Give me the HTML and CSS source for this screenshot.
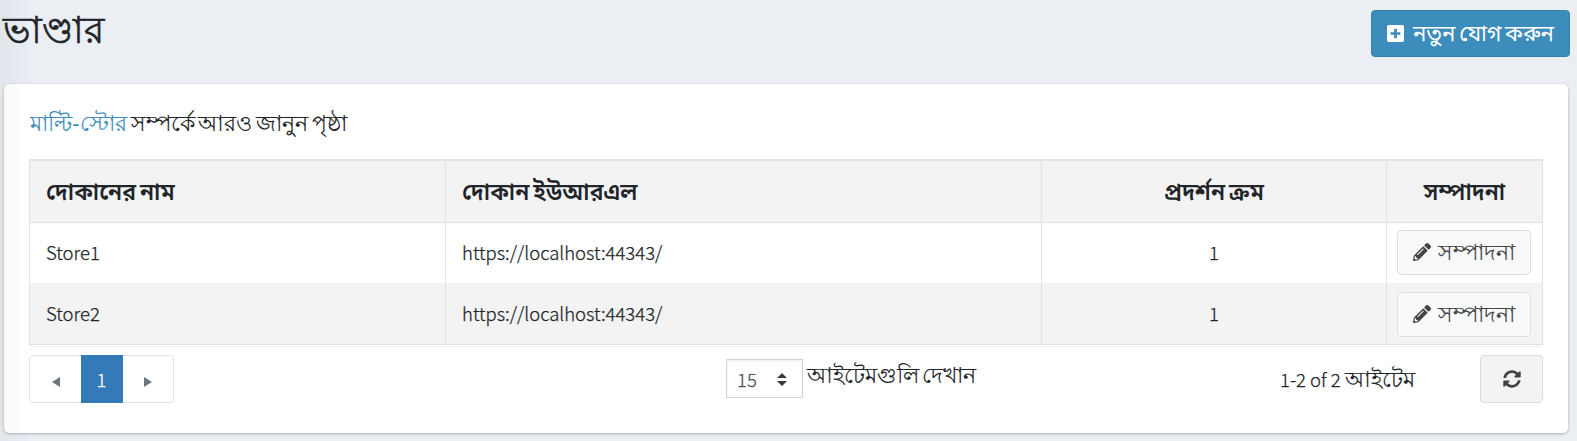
FILE: index.html
```html
<!DOCTYPE html>
<html lang="bn">
<head>
<meta charset="utf-8">
<title>ভাণ্ডার</title>
<link rel="stylesheet" href="styles.css">
</head>
<body>
<header class="page-header">
  <h1>ভাণ্ডার</h1>
  <button class="btn-add"><svg viewBox="0 0 448 448" width="17" height="17"><path fill="#fff" fill-rule="evenodd" d="M48 0h352a48 48 0 0 1 48 48v352a48 48 0 0 1-48 48H48a48 48 0 0 1-48-48V48A48 48 0 0 1 48 0zm140 96v92H96v72h92v92h72v-92h92v-72h-92V96z"/></svg><span>নতুন যোগ করুন</span></button>
</header>
<main class="card">
  <p class="intro bn"><a>মাল্টি-স্টোর</a> সম্পর্কে আরও জানুন পৃষ্ঠা</p>
  <div class="grid">
    <div class="row head">
      <div class="cell bn">দোকানের নাম</div><div class="cell bn">দোকান ইউআরএল</div><div class="cell center bn">প্রদর্শন ক্রম</div><div class="cell center bn">সম্পাদনা</div>
    </div>
    <div class="row">
      <div class="cell">Store1</div><div class="cell">https://localhost:44343/</div><div class="cell center">1</div>
      <div class="cell action"><button class="btn-edit"><svg viewBox="0 0 512 512" width="18" height="18"><path fill="#444" fill-rule="evenodd" d="M498 142l-46 46c-5 5-12 5-17 0L324 77c-5-5-5-12 0-17l46-46c19-19 49-19 68 0l60 60c19 19 19 49 0 68zM284 100L22 362 0 484c-3 16 12 30 28 28l122-22 262-262c5-5 5-12 0-17L301 100c-5-5-12-5-17 0zM124 340c-5-5-5-14 0-19l154-154c5-5 14-5 19 0s5 14 0 19L143 340c-5 5-14 5-19 0zM88 424h48v36l-64 12-32-32 12-64h36z"/></svg><span class="bn">সম্পাদনা</span></button></div>
    </div>
    <div class="row alt">
      <div class="cell">Store2</div><div class="cell">https://localhost:44343/</div><div class="cell center">1</div>
      <div class="cell action"><button class="btn-edit"><svg viewBox="0 0 512 512" width="18" height="18"><path fill="#444" fill-rule="evenodd" d="M498 142l-46 46c-5 5-12 5-17 0L324 77c-5-5-5-12 0-17l46-46c19-19 49-19 68 0l60 60c19 19 19 49 0 68zM284 100L22 362 0 484c-3 16 12 30 28 28l122-22 262-262c5-5 5-12 0-17L301 100c-5-5-12-5-17 0zM124 340c-5-5-5-14 0-19l154-154c5-5 14-5 19 0s5 14 0 19L143 340c-5 5-14 5-19 0zM88 424h48v36l-64 12-32-32 12-64h36z"/></svg><span class="bn">সম্পাদনা</span></button></div>
    </div>
  </div>
  <footer class="pager">
    <div class="pages">
      <span class="page"><svg width="8" height="10"><path fill="#6c757d" d="M8 0v10L0 5z"/></svg></span><span class="page active">1</span><span class="page"><svg width="8" height="10"><path fill="#6c757d" d="M0 0v10l8-5z"/></svg></span>
    </div>
    <div class="length"><div class="select"><span>15</span><svg width="10" height="13"><path fill="#343a40" d="M0 5l5-5 5 5zM0 8h10l-5 5z"/></svg></div><span class="bn">আইটেমগুলি দেখান</span></div>
    <div class="info">1-2 of 2 <span class="bn">আইটেম</span></div>
    <button class="btn-refresh"><svg viewBox="0 0 512 512" width="18" height="18"><path fill="#444" d="M371 134c-32-30-72-46-115-46-78 0-145 53-163 127-2 5-6 9-12 9H24c-8 0-13-7-12-14C33 94 134 8 256 8c66 0 127 26 171 68l36-36c15-15 41-4 41 17v134c0 13-11 24-24 24H346c-21 0-32-26-17-41zM32 296h134c21 0 32 26 17 41l-42 41c32 30 72 46 115 46 78 0 145-53 163-127 2-5 6-9 12-9h57c8 0 13 7 12 14-21 116-122 202-244 202-66 0-127-26-171-68l-36 36c-15 15-41 4-41-17V320c0-13 14-24 28-24z"/></svg></button>
  </footer>
</main>
</body>
</html>
```
FILE: styles.css
```css
* { box-sizing: border-box; }
body {
  margin: 0;
  height: 441px;
  overflow: hidden;
  background: linear-gradient(90deg, #e2e5ea 0, #e8ecf4 27px, #ebeef3 28px);
  font: 300 18.5px/28px "Noto Sans CJK SC", sans-serif;
  -webkit-text-stroke: .25px;
  color: #212529;
}
button { font: inherit; margin: 0; }
svg { flex: none; display: block; }
.bn { font-family: "Noto Sans", sans-serif; font-size: 22.2px; font-weight: 400; word-spacing: -2.5px; -webkit-text-stroke: .1px; }
.page-header { display: flex; justify-content: space-between; align-items: flex-start; height: 84px; padding: 10px 7px 0 3px; }
h1 { margin: -3px 0 0; font: 400 37px/44px "Noto Sans", sans-serif; -webkit-text-stroke: .6px; }
.btn-add {
  display: flex; align-items: center; gap: 9px;
  width: 199px; height: 47px; padding: 0 15px 1px;
  border: 1px solid #367fa9; border-radius: 4px;
  background: #3c8dbc; color: #fff;
  font: 400 22.2px/28px "Open Sans", "Noto Sans Bengali", sans-serif;
  -webkit-text-stroke: 0;
  word-spacing: -2px;
  white-space: nowrap;
}
.card {
  width: 1564px; height: 349px; margin-left: 4px; padding: 23px 25px 0;
  border-radius: 5px;
  background: linear-gradient(90deg, #f9f9f9 0, #fff 24px);
  box-shadow: 0 0 1px rgba(0,0,0,.2), 0 1px 3px rgba(0,0,0,.25);
}
.intro { margin: 0; height: 52px; padding-left: 1px; line-height: 32px; word-spacing: -2px; }
.intro a { color: #3c8dbc; letter-spacing: .15px; }
.grid { width: 1514px; height: 188px; border-bottom: 1px solid #f1f1f1; }
.row { display: grid; grid-template-columns: 416px 596px 345px 156px; height: 60px; border-left: 1px solid #dee2e6; }
.row.head { height: 64px; border-top: 2px solid #e2e2e2; border-bottom: 1px solid #dee2e6; background: #f3f3f3; }
.row.alt { height: 62px; background: #f3f3f3; border-bottom: 1px solid #dee2e6; }
.cell { display: flex; align-items: center; padding: 0 16px 2px; border-right: 1px solid #e0e2e4; }
.head .cell { font-family: "Noto Sans", "Noto Sans Bengali", sans-serif; font-size: 23px; font-weight: 600; word-spacing: -2px; -webkit-text-stroke: 0; }
.cell.center { justify-content: center; }
.cell.action { padding: 0 10px 2px; }
.alt .cell.action { padding-bottom: 0; }
.btn-edit {
  display: flex; align-items: center; gap: 7px;
  width: 134px; height: 45px; padding: 0 15px 1px;
  border: 1px solid #ddd; border-radius: 4px;
  background: #f8f9fa; color: #444; white-space: nowrap;
}
.alt .btn-edit { margin-top: 1px; }
.pager { display: flex; align-items: flex-start; width: 1514px; padding-top: 8px; }
.pages { display: flex; width: 145px; height: 48px; border: 1px solid #dee2e6; border-radius: 4px; }
.page { display: flex; flex: 1; align-items: center; justify-content: center; padding: 6px 0 0 1px; }
.page.active { flex: none; width: 42px; height: 48px; margin-top: -1px; padding: 0; background: #337ab7; color: #fff; }
.length { display: flex; align-items: flex-start; gap: 4px; margin-left: 552px; width: 554px; line-height: 39px; }
.length .bn { font-size: 21.8px; }
.select { display: flex; align-items: center; justify-content: space-between; width: 77px; height: 39px; margin-top: 4px; padding: 2px 15px 0 10px; border: 1px solid #ced4da; color: #495057; box-shadow: inset 0 1px 2px rgba(0,0,0,.075); }
.info { width: 200px; line-height: 47px; white-space: nowrap; }
.btn-refresh { display: flex; align-items: center; justify-content: center; width: 63px; height: 48px; border: 1px solid #ddd; border-radius: 4px; background: #f3f3f3; }
```
